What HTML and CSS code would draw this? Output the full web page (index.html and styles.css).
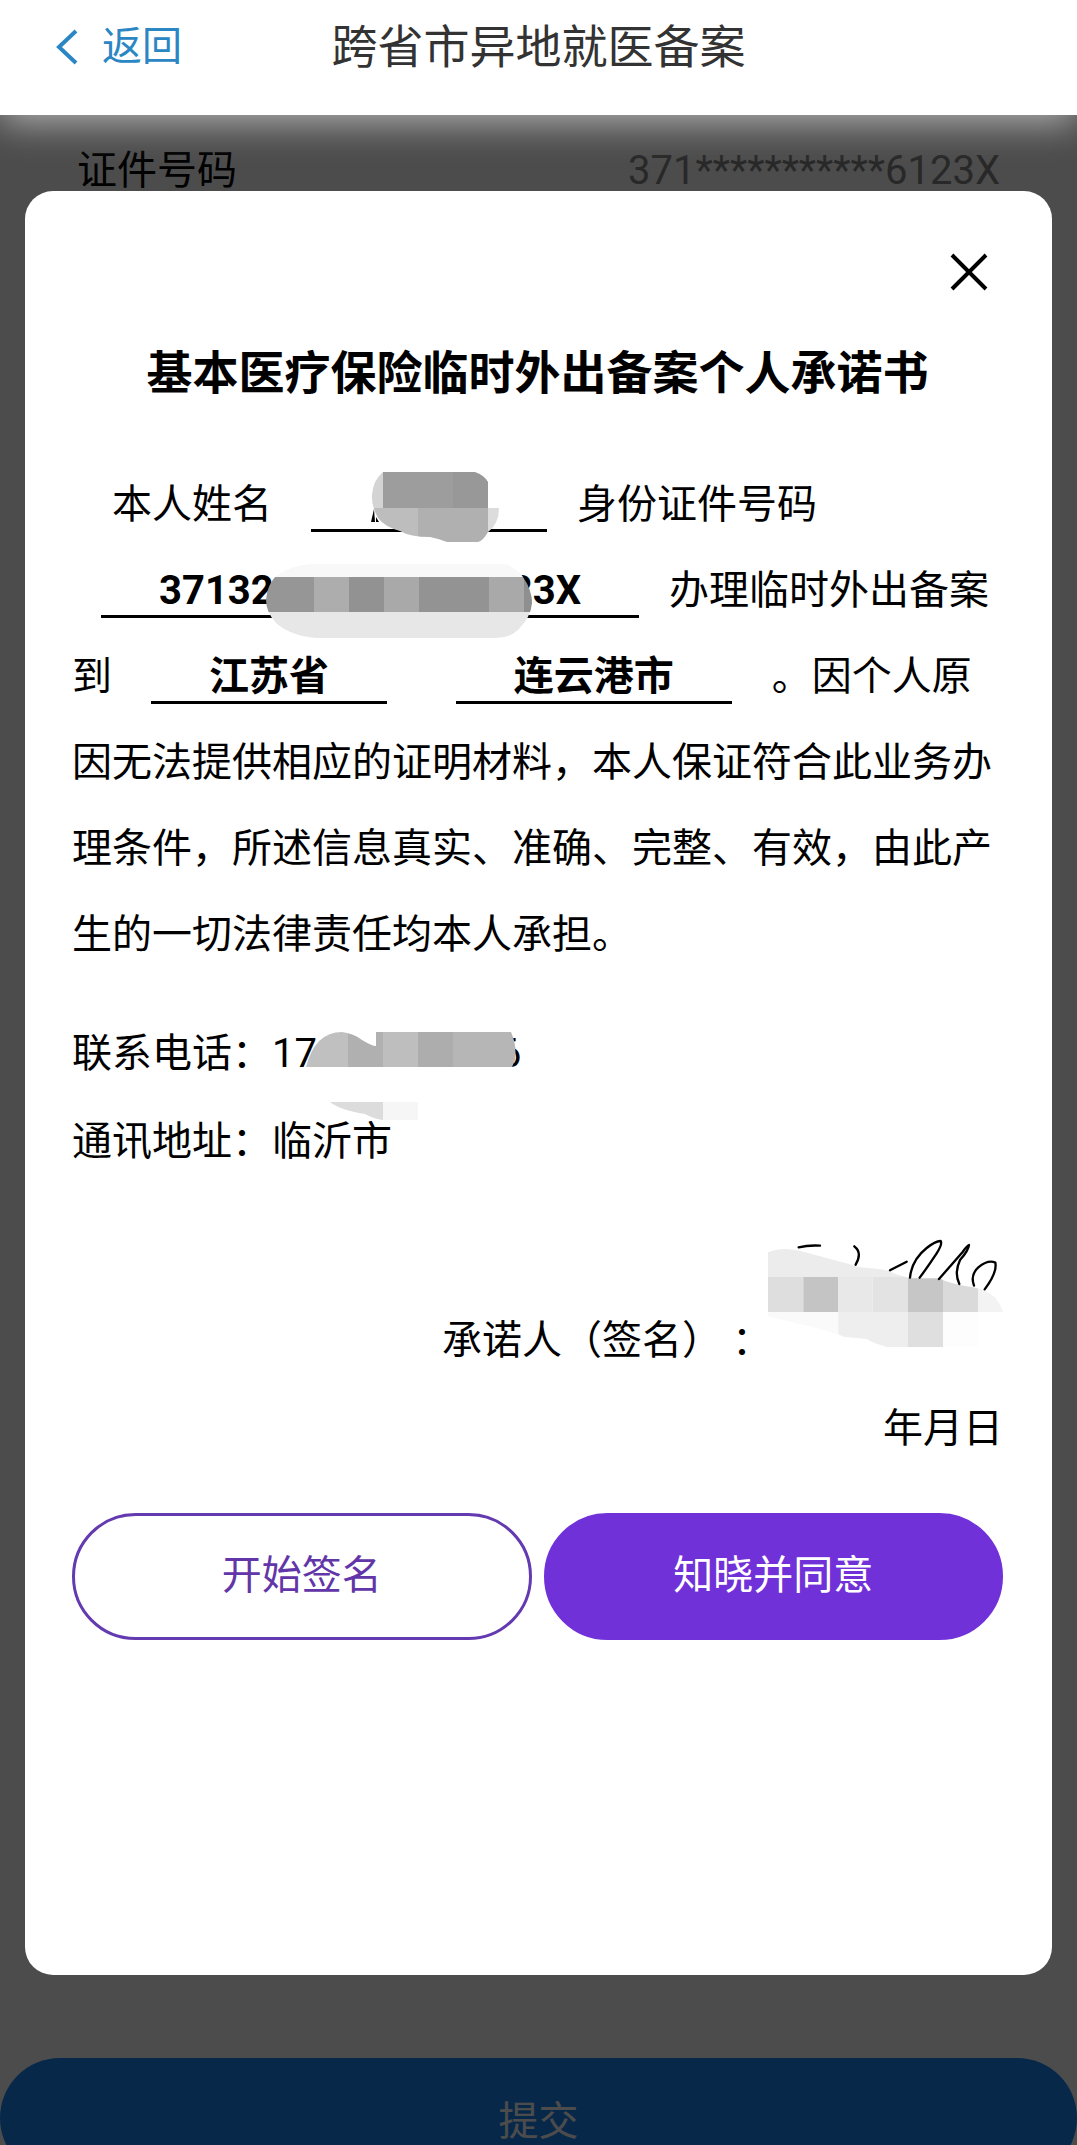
FILE: index.html
```html
<!DOCTYPE html>
<html lang="zh-CN">
<head>
<meta charset="utf-8">
<meta name="viewport" content="width=device-width, initial-scale=1">
<title>跨省市异地就医备案</title>
<link rel="stylesheet" href="styles.css">
</head>
<body>
<header class="nav">
  <a class="nav-back" href="#">
    <svg class="nav-chevron" viewBox="0 0 22 36" aria-hidden="true"><path d="M20 2 3 18l17 16"/></svg>
    <span>返回</span>
  </a>
  <h1 class="nav-title">跨省市异地就医备案</h1>
</header>
<main class="stage">
  <form class="form">
    <div class="form-row">
      <span class="form-label">证件号码</span>
      <span class="form-value">371***********6123X</span>
    </div>
    <button class="submit" type="button">提交</button>
  </form>
  <div class="overlay">
    <section class="card" role="dialog" aria-labelledby="pledge-title">
      <button class="close" type="button" aria-label="关闭">
        <svg viewBox="0 0 38 38" aria-hidden="true"><path d="M2 2l34 34M36 2 2 36"/></svg>
      </button>
      <h2 class="title" id="pledge-title">基本医疗保险临时外出备案个人承诺书</h2>
      <p class="pledge">
        <span class="indent"></span>本人姓名
        <span class="field"><span class="gap-name"></span>
          <svg class="mask mask-name" viewBox="371 472 129 71" aria-hidden="true">
            <clipPath id="clip-name"><path d="M383 472H475Q484 475 488 482V508H499Q499 524 488 532Q483 541 478 542H447Q440 539 430 537Q410 537 400 531Q385 527 378 518Q371 505 372 495Q373 480 383 472Z"/></clipPath>
            <path d="M374 509l-3 13h4zM376 517l3 5h-3z"/>
            <g clip-path="url(#clip-name)">
              <path fill="#d4d4d4" d="M371 472h12v36h-12z"/>
              <path fill="#9d9d9d" d="M383 472h70v36h-70z"/>
              <path fill="#989898" d="M453 472h35v36h-35z"/>
              <path fill="#bdbdbd" d="M371 508h47v35h-47z"/>
              <path fill="#b0b0b0" d="M418 508h70v35h-70z"/>
              <path fill="#dcdcdc" d="M488 508h12v35h-12z"/>
            </g>
          </svg></span>身份证件号码<span class="field">37132<span class="gap-id"></span>23X<svg class="mask mask-id" viewBox="265 564 267 75" aria-hidden="true">
            <clipPath id="clip-id"><path d="M274 577Q290 565 310 564H505Q518 570 522 577Q531 590 531 603Q530 617 517 630Q508 638 495 638H315Q290 636 275 623Q265 612 265 600Q266 586 274 577Z"/></clipPath>
            <g clip-path="url(#clip-id)">
              <path fill="#f8f8f8" d="M265 564h267v13H265z"/>
              <path fill="#969696" d="M265 577h48v35h-48z"/>
              <path fill="#adadad" d="M313 577h35v35h-35z"/>
              <path fill="#929292" d="M348 577h35v35h-35z"/>
              <path fill="#a9a9a9" d="M383 577h35v35h-35z"/>
              <path fill="#939393" d="M418 577h70v35h-70z"/>
              <path fill="#a9a9a9" d="M488 577h35v35h-35z"/>
              <path fill="#8f8f8f" d="M523 577h9v35h-9z"/>
              <path fill="#e7e7e7" d="M265 612h267v27H265z"/>
            </g>
          </svg></span>办理临时外出备案到
        <span class="field">江苏省</span>
        <span class="field">连云港市</span>
        。因个人原因无法提供相应的证明材料，本人保证符合此业务办理条件，所述信息真实、准确、完整、有效，由此产生的一切法律责任均本人承担。
      </p>
      <div class="contact">
        <div class="contact-row">联系电话：17<span class="gap-phone"></span>6<svg class="mask mask-phone" viewBox="306 1032 212 89" aria-hidden="true">
            <clipPath id="clip-phone"><path d="M306 1067Q315 1032 342 1032Q355 1034 362 1040Q372 1046 376 1046V1032H511Q517 1045 515 1060L512 1067Z"/></clipPath>
            <g clip-path="url(#clip-phone)">
              <path fill="#c0c0c0" d="M306 1032h42v35h-42z"/>
              <path fill="#b0b0b0" d="M348 1032h35v35h-35z"/>
              <path fill="#bebebe" d="M383 1032h35v35h-35z"/>
              <path fill="#adadad" d="M418 1032h35v35h-35z"/>
              <path fill="#b6b6b6" d="M453 1032h65v35h-65z"/>
            </g>
            <path fill="#dcdcdc" d="M330 1102H383V1120Q374 1119 365 1114Q340 1110 330 1102Z"/>
            <path fill="#f6f6f6" d="M383 1102h35v18h-35z"/>
          </svg></div>
        <div class="contact-row">通讯地址：临沂市</div>
      </div>
      <div class="sign">
        <span class="sign-label">承诺人（签名） ：</span>
        <svg class="signature" viewBox="84 51 705 330" role="img" aria-label="签名">
          <clipPath id="clip-sign"><path d="M84 97Q130 78 190 95Q340 135 360 142Q450 148 460 160L510 175H600Q620 190 700 202Q740 210 765 232Q780 250 790 276H714V381H440Q400 370 380 357L310 350Q290 335 84 290Z"/></clipPath>
          <g clip-path="url(#clip-sign)">
            <path fill="#ececec" d="M84 51h706v120H84z"/>
            <path fill="#dedede" d="M84 171h106v105H84z"/>
            <path fill="#c4c4c4" d="M190 171h105v105H190z"/>
            <path fill="#e8e8e8" d="M295 171h103v105H295z"/>
            <path fill="#e3e3e3" d="M398 171h106v105H398z"/>
            <path fill="#c6c6c6" d="M504 171h105v105H504z"/>
            <path fill="#dadada" d="M609 171h105v105H609z"/>
            <path fill="#f3f3f3" d="M714 171h76v105h-76z"/>
            <path fill="#fafafa" d="M84 276h211v105H84z"/>
            <path fill="#eee" d="M295 276h209v105H295z"/>
            <path fill="#dfdfdf" d="M504 276h105v105H504z"/>
            <path fill="#fdfdfd" d="M609 276h105v105H609z"/>
          </g>
          <path class="ink" d="M176 82Q205 75 240 77M343 79Q368 98 347 134M450 151L500 125M510 173Q515 120 560 84Q585 64 602 63Q608 72 590 100Q560 145 539 173M597 177L668 96Q680 78 687 75Q685 92 660 120Q642 160 658 192M702 197Q690 165 715 142Q745 118 766 128Q772 158 734 208"/>
        </svg>
      </div>
      <p class="date">年月日</p>
      <div class="actions">
        <button class="btn btn-outline" type="button">开始签名</button>
        <button class="btn btn-solid" type="button">知晓并同意</button>
      </div>
    </section>
  </div>
</main>
</body>
</html>
```
FILE: styles.css
```css
* {
  box-sizing: border-box;
}

body {
  margin: 0;
  min-height: 100vh;
  display: flex;
  flex-direction: column;
  background: #fff;
  color: #000;
  font-family: Roboto, "Noto Sans CJK SC", sans-serif;
  font-size: 40px;
}

button {
  font: inherit;
  cursor: pointer;
}

/* Top navigation */
.nav {
  position: relative;
  z-index: 2;
  display: grid;
  grid-template-columns: 1fr auto 1fr;
  align-items: center;
  padding: 1px 56px 22px;
  line-height: 92px;
  background: #fff;
  box-shadow: 0 6px 36px rgba(255, 255, 255, 0.6);
}

.nav-back {
  display: flex;
  align-items: center;
  gap: 24px;
  color: #2b86c4;
  text-decoration: none;
}

.nav-chevron {
  width: 22px;
  height: 36px;
  fill: none;
  stroke: currentColor;
  stroke-width: 4;
}

.nav-title {
  margin: 0;
  font-size: 46px;
  font-weight: 400;
  color: #333;
}

/* The form and the dimming overlay share one grid cell */
.stage {
  flex: 1;
  display: grid;
  overflow: hidden;
}

.form,
.overlay {
  grid-area: 1 / 1;
}

.form {
  display: flex;
  flex-direction: column;
  justify-content: space-between;
}

.form-row {
  display: flex;
  justify-content: space-between;
  padding: 26px 77px 0;
  line-height: 60px;
}

.form-value {
  color: #888;
}

.submit {
  height: 120px;
  margin-bottom: -33px;
  border: 0;
  border-radius: 60px;
  background: #1b85f7;
  color: #fff;
}

.overlay {
  z-index: 1;
  padding: 76px 25px 170px;
  background: rgba(0, 0, 0, 0.7);
}

/* Pledge dialog */
.card {
  display: flex;
  flex-direction: column;
  padding: 62px 49px 335px 47px;
  border-radius: 28px;
  background: #fff;
}

.close {
  align-self: flex-end;
  width: 38px;
  height: 38px;
  margin: 0 15px 50px 0;
  padding: 0;
  border: 0;
  background: none;
}

.close svg {
  display: block;
  fill: none;
  stroke: #000;
  stroke-width: 4;
}

.title {
  margin: 0 0 57px;
  font-size: 46px;
  line-height: 64px;
  text-align: center;
}

.pledge {
  margin: 0 0 32px;
  line-height: 86px;
}

.indent {
  display: inline-block;
  width: 40px;
}

.field {
  position: relative;
  display: inline-block;
  margin: 0 30px 0 29px;
  padding: 0 58px;
  border-bottom: 3px solid #000;
  font-weight: 700;
  line-height: 48px;
}

.gap-name {
  display: inline-block;
  width: 120px;
}

.gap-id {
  display: inline-block;
  width: 236px;
}

.gap-phone {
  display: inline-block;
  width: 182px;
}

/* Mosaic patches laid over private details */
.mask {
  position: absolute;
}

.mask-name {
  left: 60px;
  bottom: -14px;
  width: 129px;
}

.mask-id {
  left: 165px;
  bottom: -24px;
  width: 267px;
}

.mask-phone {
  left: 234px;
  top: 22px;
  width: 212px;
}

.contact-row {
  position: relative;
  line-height: 88px;
}

.sign {
  display: flex;
  justify-content: flex-end;
  align-items: flex-end;
  margin-top: 51px;
  line-height: 88px;
}

.signature {
  width: 235px;
  height: 110px;
  margin: 0 0 38px -4px;
}

.ink {
  fill: none;
  stroke: #000;
  stroke-width: 7;
  stroke-linecap: round;
  stroke-linejoin: round;
}

.date {
  margin: 0 0 40px;
  line-height: 88px;
  text-align: right;
}

.actions {
  display: grid;
  grid-template-columns: 1fr 1fr;
  gap: 12px;
}

.btn {
  height: 127px;
  padding: 0 0 10px;
  border: 3px solid #643ab0;
  border-radius: 64px;
}

.btn-outline {
  background: #fff;
  color: #6236a9;
}

.btn-solid {
  border-color: #7031d9;
  background: #7031d9;
  color: #fff;
}
```
